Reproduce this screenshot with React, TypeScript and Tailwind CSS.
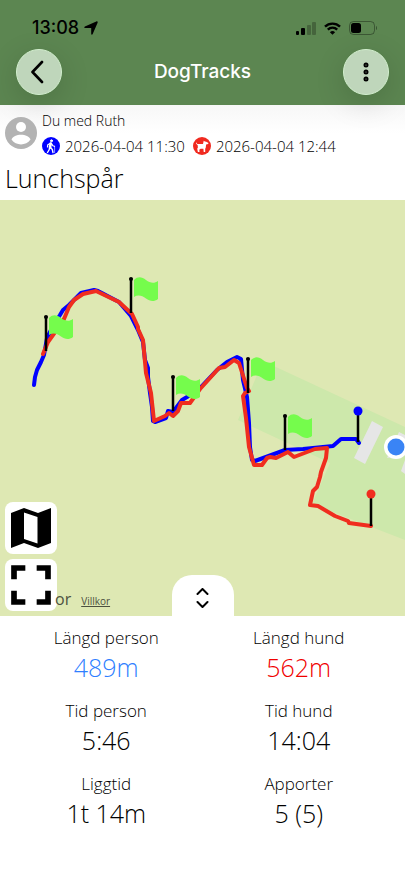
import { EllipsisVertical } from "lucide-react";
import { MdFullscreen } from "react-icons/md";

const stats = [
  { label: "Längd person", value: "489m", color: "text-[#2f7fff]" },
  { label: "Längd hund", value: "562m", color: "text-[#f00000]" },
  { label: "Tid person", value: "5:46", color: "text-black" },
  { label: "Tid hund", value: "14:04", color: "text-black" },
  { label: "Liggtid", value: "1t 14m", color: "text-black" },
  { label: "Apporter", value: "5 (5)", color: "text-black" },
];

const flags = [
  { x: 46, y: 115 },
  { x: 131, y: 77 },
  { x: 173, y: 175 },
  { x: 248, y: 157 },
  { x: 285, y: 214 },
];

const personTrack =
  "34,185 35,177 37,170 41,162 44,155 47,138 53,126 60,115 63,110 69,105 81,93 94,90 98,91 119,102 131,116 138,130 143,142 145,160 148,168 148,177 150,193 152,207 153,221 155,222 166,218 168,211 173,212 182,200 187,197 200,188 217,170 227,162 237,157 241,159 243,180 247,197 249,223 250,247 252,260 255,261 285,250 303,249 333,246 341,239 356,239 359,243";

const dogTrack =
  "43,154 48,142 53,135 64,119 69,107 74,100 83,94 96,91 119,102 132,114 138,127 138,129 143,140 146,173 151,193 154,221 165,216 169,213 173,216 178,211 181,203 190,203 200,189 210,178 219,168 225,167 234,160 239,163 247,188 249,191 245,193 243,196 246,218 249,247 254,265 262,265 267,258 270,257 276,258 288,252 294,257 315,249 327,248 326,258 321,272 320,277 317,287 313,291 310,305 318,306 335,316 348,321 349,323 371,326";

const StatusBar = () => (
  <div className="flex items-center justify-between pt-4 pr-7 pl-8">
    <div className="flex items-center gap-[5px]">
      <span className="font-['Inter',sans-serif] text-[18px] leading-6 font-medium">13:08</span>
      <svg className="h-[14px] w-[14px]" viewBox="0 0 14 14" aria-hidden="true">
        <path d="M13.4.6c.4.3.4.7.2 1.2L8.700 13c-.4 1-1.500.8-1.500-.2V7H1.300C.2 7 0 5.900.9 5.400L12.300.5c.4-.2.8-.2 1.100.1Z" />
      </svg>
    </div>
    <div className="flex items-center gap-2">
      <svg className="h-[13px] w-[20px]" viewBox="0 0 20 13" aria-hidden="true">
        <rect x="0" y="9" width="3" height="4" rx="1" />
        <rect x="5" y="6" width="4" height="7" rx="1" />
        <rect x="11" y="3" width="4" height="10" rx="1" opacity=".25" />
        <rect x="16" y="0" width="4" height="13" rx="1" opacity=".25" />
      </svg>
      <svg className="h-[13px] w-[17px]" viewBox="0 0 17 13" fill="none" stroke="#000" strokeWidth="2.400" aria-hidden="true">
        <path d="M1 4.700a10.700 10.700 0 0 1 15 0M3.800 7.600a6.700 6.700 0 0 1 9.400 0" />
        <path d="M8.500 12.800 5.900 10.200a3.700 3.700 0 0 1 5.200 0Z" fill="#000" stroke="none" />
      </svg>
      <svg className="h-[14px] w-[28px]" viewBox="0 0 28 14" aria-hidden="true">
        <rect x=".5" y=".5" width="25" height="13" rx="4" fill="none" stroke="#000" opacity=".35" />
        <rect x="2" y="2" width="10" height="10" rx="2.500" />
        <path d="M27 5c1.300.6 1.300 3.400 0 4Z" opacity=".4" />
      </svg>
    </div>
  </div>
);

const Header = () => (
  <header className="bg-[#5c8651]">
    <StatusBar />
    <div className="flex items-center justify-between px-4 pt-[9px] pb-[10px]">
      <button
        aria-label="Tillbaka"
        className="flex size-[46px] items-center justify-center rounded-full border border-[#d3efcf] bg-[#bfd6bb] shadow-[0_8px_30px_rgba(0,0,0,0.15)]"
      >
        <svg className="h-6 w-4" viewBox="0 0 16 24" fill="none" stroke="#000" strokeWidth="2.600" strokeLinecap="round" strokeLinejoin="round" aria-hidden="true">
          <path d="M11 2 1.500 12l9.500 10" />
        </svg>
      </button>
      <h1 className="font-['Inter',sans-serif] text-[19px] leading-6 font-medium text-white">DogTracks</h1>
      <button
        aria-label="Meny"
        className="flex size-[46px] items-center justify-center rounded-full border border-[#d3efcf] bg-[#bfd6bb] shadow-[0_8px_30px_rgba(0,0,0,0.15)]"
      >
        <EllipsisVertical className="size-6" strokeWidth={3} />
      </button>
    </div>
  </header>
);

const PersonIcon = () => (
  <svg className="size-[18px] shrink-0" viewBox="0 0 18 18" aria-label="Person" role="img">
    <circle cx="9" cy="9" r="9" fill="#0000ff" />
    <g fill="none" stroke="#fff" strokeLinecap="round" strokeLinejoin="round">
      <circle cx="9.500" cy="3.800" r="1" fill="#fff" />
      <path d="M8.700 6.500 8 10.500" strokeWidth="2.600" />
      <path d="M8.500 6.200 5.800 7.700 5.500 10M9.500 6.700l1.300 2 1.700.6" strokeWidth="1.200" />
      <path d="M7.700 10.700 7 13l-1.500 2.500M8.500 10.500l1.800 2 .7 3" strokeWidth="1.400" />
      <path d="M12.600 9.500v6" strokeWidth=".6" />
    </g>
  </svg>
);

const DogIcon = () => (
  <svg className="size-[18px] shrink-0" viewBox="0 0 18 18" aria-label="Hund" role="img">
    <circle cx="9" cy="9" r="9" fill="#f02a20" />
    <path
      d="M3 5.300 4.300 7H10l.7-3.200 1.200.8 1.300.1 2.300 1.200-.4 1.200-2 .4-.3 3-.6 1.200v3.200h-1.500l-.3-3.200H7.600l-1.300 1.100.2 2.100H4.900l-.7-3.100.7-1.300-.2-2.200L3 6.500Z"
      fill="#fff"
    />
  </svg>
);

const TrackInfo = () => (
  <section className="bg-gradient-to-b from-[#f7f7f7] to-white to-30% pb-[5px]">
    <div className="flex items-center gap-[5px] px-[5px] pt-[6px]">
      <svg className="-mt-1 size-8 shrink-0" viewBox="0 0 32 32" aria-hidden="true">
        <circle cx="16" cy="16" r="16" fill="#b3b3b3" />
        <circle cx="16" cy="10" r="5" fill="#fff" />
        <path d="M6.500 22.500c2-6.500 17-6.500 19 0-4.500 6.500-14.500 6.500-19 0Z" fill="#fff" />
      </svg>
      <div>
        <p className="text-[14px] leading-5">Du med Ruth</p>
        <div className="flex items-center gap-2 pt-[3px] text-[15px] leading-6">
          <span className="flex items-center gap-[5px]">
            <PersonIcon />
            2026-04-04 11:30
          </span>
          <span className="flex items-center gap-[5px]">
            <DogIcon />
            2026-04-04 12:44
          </span>
        </div>
      </div>
    </div>
    <h2 className="px-[5px] pt-[3px] text-[25px] leading-[34px]">Lunchspår</h2>
  </section>
);

const TrackMap = () => (
  <section className="relative bg-[#dee8b3]">
    <svg className="block h-auto w-full" viewBox="0 0 405 416" role="img" aria-label="Karta">
      <path d="M263 161 405 227V340L312 304l18-41-92-43Z" fill="#cde8ab" />
      <g fill="#e6e6e6">
        <path d="m372 221 11 6-18 37-11-6Z" />
        <path d="m399 232 6 3v20l-18 3Z" />
        <path d="m405 260-4 11 4 3Z" />
      </g>
      <g fill="none" strokeWidth="4" strokeLinecap="round" strokeLinejoin="round">
        <polyline points={personTrack} stroke="#0000ff" />
        <polyline points={dogTrack} stroke="#f02d1f" />
      </g>
      {flags.map(({ x, y }) => (
        <g key={x} transform={`translate(${x} ${y})`}>
          <path d="M3 3C7-1 11 0 15 3s8 4 12 1v18c-4 3-8 2.500-12-.5s-8-4-12-1.500Z" fill="#75fc4c" />
          <path d="M0 1v35" stroke="#000" strokeWidth="2.500" />
          <circle cy="2" r="2" />
        </g>
      ))}
      <path d="M358 213v29M371 296v30" stroke="#000" strokeWidth="2.500" />
      <circle cx="358" cy="211" r="4.500" fill="#0000ff" />
      <circle cx="371" cy="294" r="4.500" fill="#f02d1f" />
      <circle cx="396" cy="247" r="12" fill="#fff" />
      <circle cx="396" cy="247" r="8.500" fill="#3a84f5" />
    </svg>

    <div className="absolute bottom-[5px] left-[5px] flex items-end">
      <div className="flex flex-col gap-[5px]">
        <button aria-label="Kartlager" className="flex size-[52px] items-center justify-center rounded-lg bg-white">
          <svg className="size-10" viewBox="0 0 40 40" aria-hidden="true">
            <path
              d="M0 5 13 0l14 5L40 0v35l-13 5-14-5-13 5ZM13 4.500V31l13.500 4.500V9Z"
              fillRule="evenodd"
            />
          </svg>
        </button>
        <button aria-label="Helskärm" className="flex size-[52px] items-center justify-center rounded-lg bg-white">
          <MdFullscreen className="size-[68px] shrink-0" />
        </button>
      </div>
      <span className="-ml-[2px] text-[16px] leading-6 font-normal text-[#4c5040]">or</span>
      <a href="#villkor" className="ml-[10px] text-[10px] leading-5 font-normal text-[#4c5040] underline">
        Villkor
      </a>
    </div>

    <div className="absolute inset-x-0 bottom-0 flex justify-center">
      <button
        aria-label="Visa mer"
        className="flex h-[41px] w-[62px] items-center justify-center rounded-t-[20px] bg-white pt-1"
      >
        <svg className="h-5 w-[13px]" viewBox="0 0 13 20" fill="none" stroke="#000" strokeWidth="2" strokeLinecap="round" strokeLinejoin="round" aria-hidden="true">
          <path d="m1.500 6 5-5 5 5M1.500 14l5 5 5-5" />
        </svg>
      </button>
    </div>
  </section>
);

const App = () => {
  return (
    <div className="min-h-screen bg-white font-['Open_Sans','Noto_Sans',sans-serif] font-[350] text-black">
      <Header />
      <main>
        <TrackInfo />
        <TrackMap />
        <dl className="grid grid-cols-2 gap-y-[15px] px-[10px] pt-[10px] text-center">
          {stats.map((stat) => (
            <div key={stat.label}>
              <dt className="text-[17px] leading-6">{stat.label}</dt>
              <dd className={`text-[25px] leading-[34px] ${stat.color}`}>{stat.value}</dd>
            </div>
          ))}
        </dl>
      </main>
    </div>
  );
};

export default App;
